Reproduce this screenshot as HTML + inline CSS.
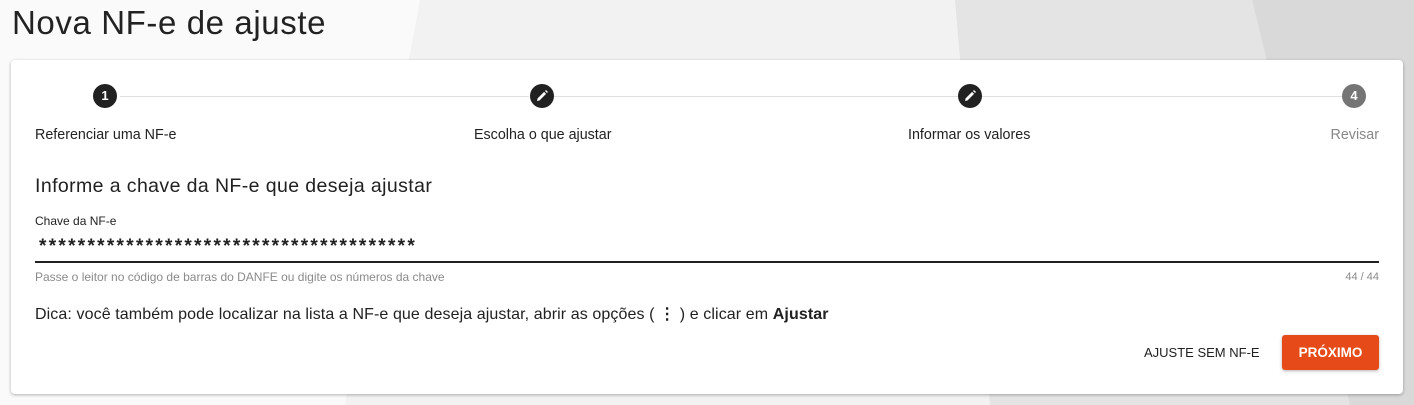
<!DOCTYPE html>
<html><head><meta charset="utf-8"><style>
*{margin:0;padding:0;box-sizing:border-box}
body{width:1414px;height:405px;overflow:hidden;font-family:"Liberation Sans",sans-serif;color:#212121;position:relative;background:#fafafa}
svg.bg{position:absolute;left:0;top:0}
h1{position:absolute;left:12px;top:4px;font-size:33px;font-weight:400;color:#222;letter-spacing:0.6px}
.card{position:absolute;left:11px;top:60px;width:1392px;height:334px;background:#fff;border-radius:4px;box-shadow:0 1px 3px rgba(0,0,0,.3)}
.line{position:absolute;top:36px;height:1px;background:#e0e0e0}
.dot{position:absolute;top:24px;width:24px;height:24px;border-radius:50%;background:#212121;color:#fff;font-size:13px;font-weight:bold;text-align:center;line-height:24px}
.lbl{position:absolute;top:67px;font-size:14.3px;color:#222}
.abs{position:absolute}
</style></head><body>
<svg class="bg" width="1414" height="405"><polygon points="420,0 958,0 1000,405 345,405" fill="#f2f2f2"/><polygon points="955,0 1252,0 1350,405 990,405" fill="#e4e4e4"/><polygon points="1252,0 1414,0 1414,405 1350,405" fill="#d9d9d9"/></svg>
<h1>Nova NF-e de ajuste</h1>
<div class="card">
<div class="line" style="left:109px;width:409px"></div>
<div class="line" style="left:542px;width:405px"></div>
<div class="line" style="left:971px;width:360px"></div>
<div class="dot" style="left:82px">1</div>
<div class="dot" style="left:519px"><svg width="24" height="24" viewBox="0 0 24 24"><path d="M7 17l.6-2.6 6.5-6.5 2 2-6.5 6.5zM15 7l1-1 2 2-1 1z" fill="#fff"/></svg></div>
<div class="dot" style="left:947px"><svg width="24" height="24" viewBox="0 0 24 24"><path d="M7 17l.6-2.6 6.5-6.5 2 2-6.5 6.5zM15 7l1-1 2 2-1 1z" fill="#fff"/></svg></div>
<div class="dot" style="left:1331px;background:#757575">4</div>
<div class="lbl" style="left:24px">Referenciar uma NF-e</div>
<div class="lbl" style="left:463px">Escolha o que ajustar</div>
<div class="lbl" style="left:897px">Informar os valores</div>
<div class="lbl" style="right:24px;color:#888">Revisar</div>
<div class="abs" style="left:24px;top:115px;font-size:19.5px;letter-spacing:0.4px">Informe a chave da NF-e que deseja ajustar</div>
<div class="abs" style="left:24px;top:154px;font-size:12px">Chave da NF-e</div>
<div class="abs" style="left:28px;top:176px;font-size:19px;font-weight:bold;letter-spacing:2.3px">***************************************</div>
<div class="abs" style="left:24px;top:201px;width:1344px;height:2px;background:#222"></div>
<div class="abs" style="left:24px;top:210px;font-size:12px;color:#8a8a8a">Passe o leitor no código de barras do DANFE ou digite os números da chave</div>
<div class="abs" style="right:24px;top:211px;font-size:11px;color:#8a8a8a">44 / 44</div>
<div class="abs" style="left:24px;top:244px;font-size:16px;letter-spacing:0.1px">Dica: você também pode localizar na lista a NF-e que deseja ajustar, abrir as opções ( <b>⋮</b> ) e clicar em <b style="font-weight:600">Ajustar</b></div>
<div class="abs" style="left:1133px;top:285px;font-size:13px">AJUSTE SEM NF-E</div>
<div class="abs" style="left:1271px;top:275px;width:97px;height:35px;background:#e64a19;border-radius:3px;color:#fff;font-size:13.5px;font-weight:bold;text-align:center;line-height:35px;box-shadow:0 1px 3px rgba(0,0,0,.3)">PRÓXIMO</div>
</div>
</body></html>
